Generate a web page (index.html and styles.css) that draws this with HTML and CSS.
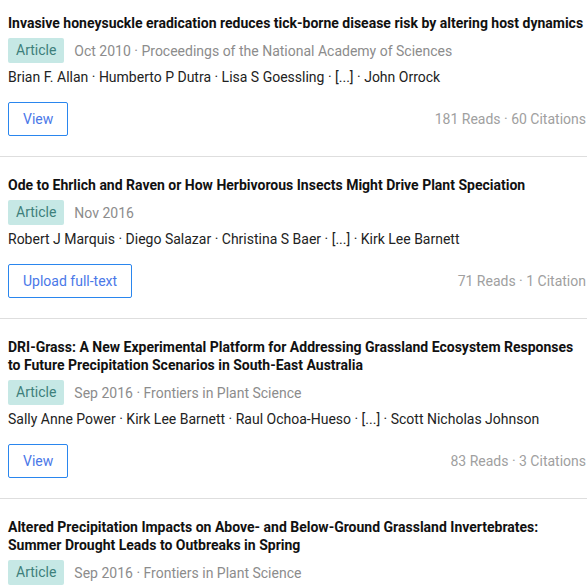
FILE: index.html
```
<!DOCTYPE html>
<html>
<head>
<meta charset="utf-8">
<link rel="stylesheet" href="styles.css">
</head>
<body>
<div class="list">
  <div class="item first">
    <div class="title">Invasive honeysuckle eradication reduces tick-borne disease risk by altering host dynamics</div>
    <div class="meta"><span class="badge">Article</span><span class="info">Oct 2010 · Proceedings of the National Academy of Sciences</span></div>
    <div class="authors">Brian F. Allan · Humberto P Dutra · Lisa S Goessling · [...] · John Orrock</div>
    <div class="actions"><span class="btn">View</span><span class="stats">181 Reads · 60 Citations</span></div>
  </div>
  <div class="item">
    <div class="title">Ode to Ehrlich and Raven or How Herbivorous Insects Might Drive Plant Speciation</div>
    <div class="meta"><span class="badge">Article</span><span class="info">Nov 2016</span></div>
    <div class="authors">Robert J Marquis · Diego Salazar · Christina S Baer · [...] · Kirk Lee Barnett</div>
    <div class="actions"><span class="btn">Upload full-text</span><span class="stats">71 Reads · 1 Citation</span></div>
  </div>
  <div class="item">
    <div class="title">DRI-Grass: A New Experimental Platform for Addressing Grassland Ecosystem Responses to Future Precipitation Scenarios in South-East Australia</div>
    <div class="meta"><span class="badge">Article</span><span class="info">Sep 2016 · Frontiers in Plant Science</span></div>
    <div class="authors">Sally Anne Power · Kirk Lee Barnett · Raul Ochoa-Hueso · [...] · Scott Nicholas Johnson</div>
    <div class="actions"><span class="btn">View</span><span class="stats">83 Reads · 3 Citations</span></div>
  </div>
  <div class="item last">
    <div class="title">Altered Precipitation Impacts on Above- and Below-Ground Grassland Invertebrates:<br>Summer Drought Leads to Outbreaks in Spring</div>
    <div class="meta"><span class="badge">Article</span><span class="info">Sep 2016 · Frontiers in Plant Science</span></div>
  </div>
</div>
</body>
</html>
```
FILE: styles.css
```
html, body {
  margin: 0;
  padding: 0;
  background: #fff;
}
body {
  font-family: Roboto, "Liberation Sans", sans-serif;
  font-size: 14px;
  color: #222;
  overflow: hidden;
}
.list {
  display: flex;
  flex-direction: column;
}
.item {
  padding: 19px 1px 20px 8px;
  border-bottom: 1px solid #dedede;
}
.item.first {
  padding-top: 14px;
}
.item.last {
  padding-bottom: 0;
  border-bottom: none;
}
.title {
  font-weight: 700;
  font-size: 14px;
  line-height: 18px;
  color: #111;
}
.meta {
  display: flex;
  align-items: center;
  margin-top: 6px;
  height: 25px;
}
.badge {
  background: #c6e8e5;
  color: #3d7f7b;
  border-radius: 2px;
  padding: 0 8px;
  line-height: 25px;
  height: 25px;
}
.info {
  margin-left: 10px;
  color: #8c8c8c;
}
.authors {
  margin-top: 4px;
  line-height: 20px;
  color: #222;
}
.actions {
  margin-top: 15px;
  display: flex;
  align-items: center;
  justify-content: space-between;
}
.btn {
  box-sizing: border-box;
  height: 34px;
  line-height: 32px;
  padding: 0 14px;
  border: 1px solid #2a86ee;
  border-radius: 2px;
  color: #4a78e8;
}
.stats {
  color: #a0a0a0;
}
```
